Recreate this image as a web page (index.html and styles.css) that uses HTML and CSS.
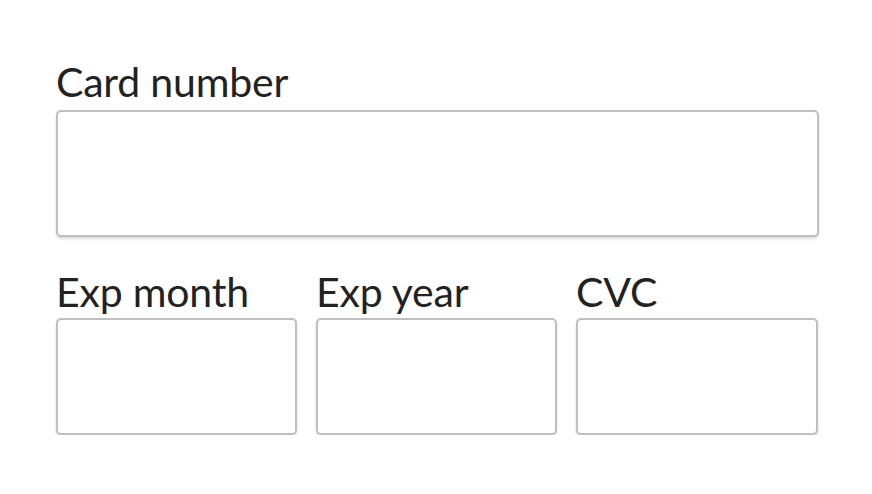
FILE: index.html
```html
<!DOCTYPE html>
<html>
<head>
<meta charset="utf-8">
<link rel="stylesheet" href="styles.css">
</head>
<body>
<form class="form">
  <div class="field field-main">
    <label class="label">Card number</label>
    <div class="input input-lg"></div>
  </div>
  <div class="row">
    <div class="field">
      <label class="label">Exp month</label>
      <div class="input input-sm"></div>
    </div>
    <div class="field">
      <label class="label">Exp year</label>
      <div class="input input-sm"></div>
    </div>
    <div class="field">
      <label class="label">CVC</label>
      <div class="input input-sm"></div>
    </div>
  </div>
</form>
</body>
</html>
```
FILE: styles.css
```css
html, body {
  margin: 0;
  background: #ffffff;
}
.form {
  width: 763px;
  padding: 60px 0 0 56px;
  display: flex;
  flex-direction: column;
  gap: 33px;
  font-family: Lato, "Open Sans", sans-serif;
  color: #222222;
}
.field {
  display: flex;
  flex-direction: column;
  gap: 4px;
}
.field-main {
  gap: 6px;
}
.label {
  font-size: 41px;
  line-height: 44px;
  letter-spacing: -0.2px;
}
.row {
  display: grid;
  grid-template-columns: 241px 241px 242px;
  gap: 19px;
}
.input {
  box-sizing: border-box;
  border: 2px solid #bfbfbf;
  border-radius: 5px;
  background: #fff;
  box-shadow: 0 2px 3px rgba(0, 0, 0, 0.14);
}
.input-lg {
  height: 127px;
}
.input-sm {
  height: 117px;
}
```
